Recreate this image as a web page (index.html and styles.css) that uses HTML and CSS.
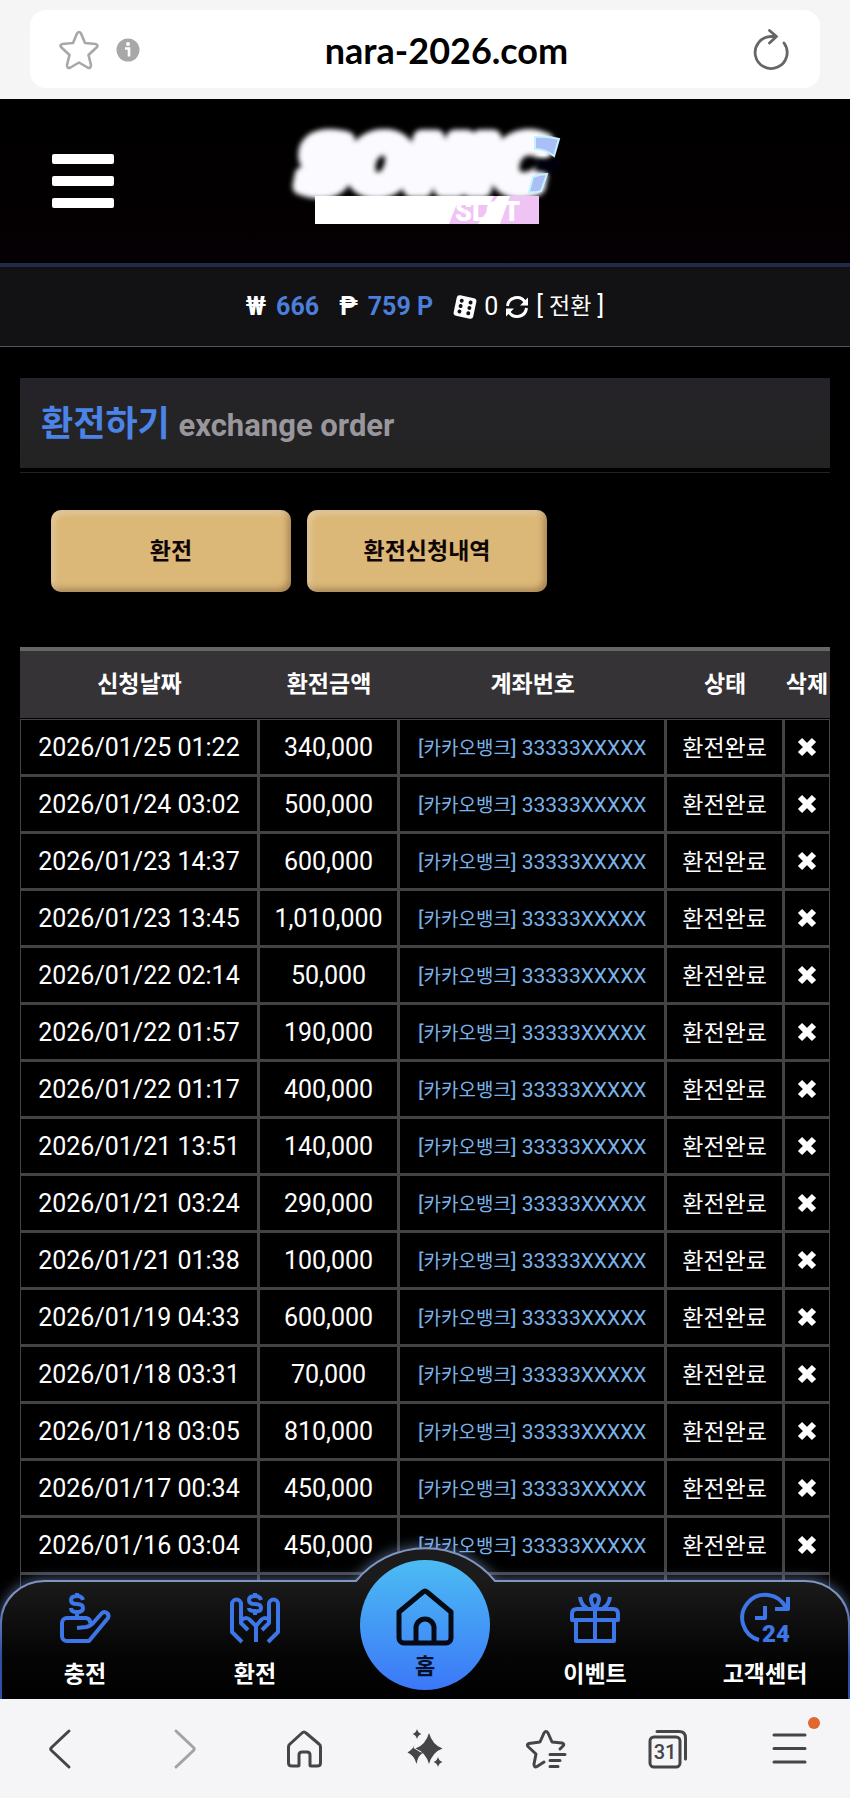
FILE: index.html
```html
<!DOCTYPE html>
<html lang="ko">
<head>
  <meta charset="UTF-8" />
  <meta name="viewport" content="width=device-width, initial-scale=1.0"/>
  <title>환전하기</title>
  <link rel="stylesheet" href="styles.css">
</head>
<body>
  <div class="address-bar">
    <div class="address-field">
      <button class="plain" aria-label="즐겨찾기">
        <svg width="40" height="40" viewBox="0 0 40 40" fill="none" stroke="#a8a8a8" stroke-width="2.6" stroke-linejoin="round"><path d="M18 3.5Q20 .5 22 3.5L26 13L36.500 14Q40 15 37.500 17.500L29.500 25L32 35Q32 39 28.500 37.500L20 32.500L11.500 37.500Q8 39 8 35L10.500 25L2.500 17.500Q0 15 3.500 14L14 13Z"/></svg>
      </button>
      <svg width="24" height="24" viewBox="0 0 24 24"><circle cx="12" cy="12" r="11.500" fill="#a8a8a8"/><circle cx="12" cy="6" r="2" fill="#fff"/><path d="M9 10.500h4v8" fill="none" stroke="#fff" stroke-width="2.600"/></svg>
      <input class="url" type="text" value="nara-2026.com" aria-label="주소" />
      <button class="plain" aria-label="새로고침">
        <svg width="36" height="42" viewBox="0 0 36 42" fill="none" stroke="#666" stroke-width="2.800" stroke-linecap="round" stroke-linejoin="round"><path d="M31 14A16 16 0 1 1 18 7.500H23M16.500 1.500L23.500 7.500L16.500 14"/></svg>
      </button>
    </div>
  </div>

  <div class="page">
    <header class="site-header">
      <button class="burger" aria-label="메뉴"><span></span><span></span><span></span></button>
      <a class="logo" href="#" aria-label="SONIC SLOT">
        <svg width="290" height="110" viewBox="0 0 290 110">
          <defs><filter id="glow" x="-10%" y="-20%" width="120%" height="140%"><feGaussianBlur stdDeviation="2.500"/></filter></defs>
          <g font-family="DejaVu Sans, sans-serif" font-weight="700" font-style="italic" font-size="70" filter="url(#glow)">
            <text x="20" y="63" fill="#fbfbff" stroke="#fbfbff" stroke-width="17" stroke-linejoin="round">SONIC</text>
          </g>
          <path d="M257 33L284 34L276 47L255 45Z" fill="#05060c" filter="url(#glow)"/>
          <path d="M255 11Q268 10 279 13L274 30Q265 23 255 23Z" fill="#a9bff5" stroke="#c6f1ff" stroke-width="2"/>
          <path d="M253 51Q260 48 267 48L261 65Q255 67 249 66Z" fill="#a9bff5" stroke="#c6f1ff" stroke-width="2"/>
          <rect x="35" y="70" width="224" height="28" fill="#fff"/>
          <path d="M180 70h79v28h-90z" fill="#efc4f5"/>
          <path d="M178 70h36l-5 9h-33zM218 70h12l-10 28h-22z" fill="#fff"/>
          <text x="175" y="95" font-family="Roboto, sans-serif" font-size="27" font-weight="900" fill="#fff">SLOT</text>
        </svg>
      </a>
    </header>

    <div class="wallet">
      <div class="wallet-item"><b>₩</b><b class="amount">666</b></div>
      <div class="wallet-item"><b>₱</b><b class="amount">759 P</b></div>
      <div class="wallet-item casino">
        <svg width="24" height="24" viewBox="0 0 24 24"><g transform="rotate(12 12 12)"><rect x="2" y="1.500" width="20" height="21" rx="3" fill="#fff"/><g fill="#121214"><circle cx="7.500" cy="6.500" r="2"/><circle cx="7.500" cy="12" r="2"/><circle cx="7.500" cy="17.500" r="2"/><circle cx="16.500" cy="6.500" r="2"/><circle cx="16.500" cy="12" r="2"/><circle cx="16.500" cy="17.500" r="2"/></g></g></svg>
        <span>0</span>
        <a class="convert" href="#">
          <svg width="24" height="24" viewBox="0 0 24 24" fill="none" stroke="#fff" stroke-width="3"><path d="M2.500 11A9.500 9.500 0 0 1 20 7M21.500 13A9.500 9.500 0 0 1 4 17"/><path d="M23 2.500v8h-8zM1 21.500v-8h8z" fill="#fff" stroke="none"/></svg>
          <span>[ <span class="convert-label">전환</span> ]</span>
        </a>
      </div>
    </div>

    <main>
      <h1>환전하기 <small>exchange order</small></h1>

      <div class="actions">
        <button class="gold">환전</button>
        <button class="gold">환전신청내역</button>
      </div>

      <table>
        <colgroup><col class="c-date"><col class="c-amount"><col class="c-account"><col class="c-state"><col class="c-delete"></colgroup>
        <thead>
          <tr><th>신청날짜</th><th>환전금액</th><th>계좌번호</th><th>상태</th><th>삭제</th></tr>
        </thead>
        <tbody id="orders"></tbody>
      </table>
    </main>

    <nav class="dock">
      <svg class="dock-bg" viewBox="0 0 850 160" preserveAspectRatio="none">
        <defs><linearGradient id="dockFill" x1="0" y1="0" x2="0" y2="1"><stop offset=".2" stop-color="#1b1b1c"/><stop offset=".7" stop-color="#050506"/><stop offset="1" stop-color="#000"/></linearGradient>
        <linearGradient id="dockLine" x1="0" y1="0" x2="0" y2="1"><stop offset=".3" stop-color="#8095c0"/><stop offset=".7" stop-color="#3050a8"/></linearGradient></defs>
        <path d="M1 162V84A44 42 0 0 1 45 42H356A90 90 0 0 1 495 42H805A44 42 0 0 1 849 84V162Z" fill="url(#dockFill)" stroke="url(#dockLine)" stroke-width="2"/>
      </svg>
      <a class="dock-item" href="#">
        <svg width="50" height="50" viewBox="0 0 50 50"><path d="M17 35L26 34Q31 33 34 29L42 20A4 4 0 0 1 48 25L29 48H7A5 5 0 0 1 2 43V30A5 5 0 0 1 7 25H26Q31 26 30 31"/><path d="M17 0v3M17 19v6M23 7Q22 3 17 3Q11 3 11 7T17 11Q23 11 23 15T17 19Q11 19 11 15"/></svg>
        충전
      </a>
      <a class="dock-item" href="#">
        <svg width="50" height="50" viewBox="0 0 50 50"><path d="M12 49L2 39V11A4 4 0 0 1 11 11V30L18 37M38 49L48 39V11A4 4 0 0 0 39 11V30L32 37M12 27Q16 23 20 27L26 33L31 27Q35 23 39 27M26 33V49"/><path d="M25 0v3M25 18v4M31 7Q30 3 25 3Q19 3 19 7T25 11Q31 11 31 15T25 18Q19 18 19 15"/></svg>
        환전
      </a>
      <a class="dock-item" href="#">
        <span class="home-disc">
          <svg width="58" height="58" viewBox="0 0 58 58"><path d="M27 4Q29 2 31 4L55 24V50A5 5 0 0 1 50 55H8A5 5 0 0 1 3 50V24ZM20 55V40A9 9 0 0 1 38 40V55"/></svg>
          홈
        </span>
      </a>
      <a class="dock-item" href="#">
        <svg width="50" height="50" viewBox="0 0 50 50"><path d="M6 28V48H44V28M25 16V48M2 27V21Q2 16 7 16H43Q48 16 48 21V27ZM25 16Q17 3 25 2Q33 3 25 16ZM10 4Q11 12 17 15M40 4Q39 12 33 15"/></svg>
        이벤트
      </a>
      <a class="dock-item" href="#">
        <svg width="50" height="50" viewBox="0 0 50 50"><path d="M19 47A23 23 0 1 1 46 15M48 4V16H35M25 13V25H15"/><text x="22" y="49" font-size="24">24</text></svg>
        고객센터
      </a>
    </nav>
  </div>

  <div class="browser-bar">
    <button class="plain" aria-label="뒤로"><svg width="40" height="40" viewBox="0 0 40 40"><path d="M28 2L10.500 18.500Q9 20 10.500 21.500L28 38"/></svg></button>
    <button class="plain" aria-label="앞으로"><svg class="off" width="40" height="40" viewBox="0 0 40 40"><path d="M14 2L31.500 18.500Q33 20 31.500 21.500L14 38"/></svg></button>
    <button class="plain" aria-label="홈"><svg width="40" height="40" viewBox="0 0 40 40"><path d="M18 4Q20 2 22 4L35 15Q36.500 16 36.500 18V34Q36.500 37 33 37H27Q26 37 26 36V26Q26 23 23 23H18Q15 23 15 26V36Q15 37 14 37H8Q4.500 37 4.500 34V18Q4.500 16 6 15Z"/></svg></button>
    <button class="plain" aria-label="AI"><svg class="solid" width="40" height="40" viewBox="0 0 40 40"><path d="M24 4Q27.500 16 37.500 19.500Q27.500 23 24 35Q20.500 23 10.500 19.500Q20.500 16 24 4ZM12 0Q13 4 16.500 5Q13 6 12 10Q11 6 7.500 5Q11 4 12 0ZM33 28Q34 32 37.500 33Q34 34 33 38Q32 34 28.500 33Q32 32 33 28ZM11 12L8.500 19L15 23L18 24Q13 26 11.500 35Q9 26 2.500 23.500Q9 20 11 12Z"/></svg></button>
    <button class="plain" aria-label="북마크"><svg width="40" height="40" viewBox="0 0 40 40"><path d="M34 20L37 17Q39 15 36 14L26 13L22 4Q20 1 18 4L14 13L3 14.500Q0 15.500 2.500 18L10 25L8 35Q8 39 11 37.500L18 33M24 25.500H39M24 31.500H34M24 37.500H32"/></svg></button>
    <button class="plain" aria-label="탭"><svg width="40" height="40" viewBox="0 0 40 40"><rect x="2" y="8" width="30" height="30" rx="4"/><path d="M9 2.500H31Q37.500 2.500 37.500 9V30"/><text x="17" y="30" text-anchor="middle" font-size="20">31</text></svg></button>
    <button class="plain menu" aria-label="메뉴"><svg width="40" height="40" viewBox="0 0 40 40"><path d="M5 6H36M5 19.500H36M5 33H36"/></svg><i class="dot"></i></button>
  </div>

  <script>
    const orders = [
      ['2026/01/25 01:22', '340,000'],
      ['2026/01/24 03:02', '500,000'],
      ['2026/01/23 14:37', '600,000'],
      ['2026/01/23 13:45', '1,010,000'],
      ['2026/01/22 02:14', '50,000'],
      ['2026/01/22 01:57', '190,000'],
      ['2026/01/22 01:17', '400,000'],
      ['2026/01/21 13:51', '140,000'],
      ['2026/01/21 03:24', '290,000'],
      ['2026/01/21 01:38', '100,000'],
      ['2026/01/19 04:33', '600,000'],
      ['2026/01/18 03:31', '70,000'],
      ['2026/01/18 03:05', '810,000'],
      ['2026/01/17 00:34', '450,000'],
      ['2026/01/16 03:04', '450,000']
    ];
    const tbody = document.getElementById('orders');

    orders.forEach(([date, amount]) => {
      const tr = document.createElement('tr');
      tr.innerHTML = `<td>${date}</td><td>${amount}</td>
        <td class="account">[<span>카카오뱅크</span>] 33333XXXXX</td>
        <td class="state">환전완료</td>
        <td><button class="plain delete" aria-label="삭제"><svg width="20" height="20" viewBox="0 0 20 20"><path d="M3 3L17 17M17 3L3 17"/></svg></button></td>`;
      tbody.appendChild(tr);
    });
    // last row runs under the dock
    tbody.insertAdjacentHTML('beforeend', '<tr><td></td><td></td><td></td><td></td><td></td></tr>');
  </script>
</body>
</html>
```
FILE: styles.css
```css
* { box-sizing: border-box; }
body { margin: 0; height: 100vh; display: flex; flex-direction: column; background: #000; color: #fff; font-family: Roboto, "Noto Sans CJK KR", sans-serif; font-size: 25px; overflow: hidden; }
a { color: inherit; text-decoration: none; }
svg { display: block; flex: none; overflow: visible; }
button { font-family: inherit; cursor: pointer; }
.plain { background: none; border: 0; padding: 0; display: flex; justify-content: center; align-items: center; }

.address-bar { flex: none; background: #f5f5f5; padding: 10px 30px 11px; }
.address-field { display: flex; align-items: center; height: 78px; padding: 2px 31px 0 29px; background: #fff; border-radius: 16px; }
.address-field > svg { margin-left: 17px; }
.url { flex: 1; min-width: 0; border: 0; padding: 0; background: none; text-align: center; font-family: Lato, sans-serif; font-weight: 700; font-size: 36px; color: #000; outline: 0; }

.page { flex: 1; min-height: 0; position: relative; overflow: hidden; background: linear-gradient(#000, #050003 163px, #000 163px); }
.site-header { display: grid; grid-template-columns: 1fr auto 1fr; align-items: center; height: 164px; padding: 0 52px; }
.burger { display: flex; flex-direction: column; gap: 12px; width: 62px; padding: 0; border: 0; background: none; }
.burger span { height: 10px; width: 100%; background: #fff; border-radius: 2px; }

.wallet { display: flex; justify-content: center; align-items: center; gap: 20px; height: 84px; border-top: 4px solid #1f2a4c; border-bottom: 1px solid #555; background: #121214; }
.wallet-item, .convert { display: flex; align-items: center; gap: 10px; line-height: 30px; }
.casino, .convert { gap: 7px; }
.amount { color: #4b7fdb; }
.convert-label { font-size: 23px; }

main { padding: 31px 20px 0; }
h1 { margin: 0 0 4px; height: 90px; padding: 2px 21px 0; line-height: 90px; background: linear-gradient(#252328, #232323); font-size: 35px; color: #4b83e6; }
h1 small { font-size: 31px; color: #99979b; }
.actions { display: flex; gap: 16px; padding: 37px 31px 55px; border-top: 1px solid #222; }
.gold { width: 240px; height: 82px; padding: 0 0 4px; border: 0; border-radius: 10px; background: #dbb878; box-shadow: inset 3px 3px 6px rgba(255, 255, 255, .3), inset -3px -3px 6px rgba(60, 30, 0, .35); color: #100505; font-size: 23px; font-weight: 700; }

table { width: 100%; table-layout: fixed; border-collapse: separate; border-spacing: 0; text-align: center; }
.c-date { width: 29.5%; }
.c-amount { width: 17.3%; }
.c-account { width: 33%; }
.c-state { width: 14.5%; }
.c-delete { width: 5.7%; }
th { height: 72px; padding: 0 0 5px; background: #353335; border-top: 4px solid #666; border-bottom: 1px solid #000; font-size: 23px; white-space: nowrap; }
td { height: 57px; padding: 0; border: solid #434245; border-width: 1px 2px 2px 1px; white-space: nowrap; }
td:last-child { border-right-width: 1px; }
.account { padding-bottom: 2px; font-size: 21px; color: #7ab3ea; }
.account span { font-size: 19px; }
.state { padding-bottom: 3px; font-size: 23px; }
.delete { margin: 0 auto; }
.delete path { stroke: #fff; stroke-width: 6; }

.dock { position: absolute; left: 0; right: 0; bottom: 0; height: 160px; display: grid; grid-template-columns: repeat(5, 1fr); align-items: end; }
.dock-bg { position: absolute; width: 100%; height: 100%; filter: drop-shadow(0 -2px 6px rgba(130, 160, 220, .5)); }
.dock-item { position: relative; display: flex; flex-direction: column; align-items: center; gap: 17px; padding-bottom: 9px; font-size: 23px; line-height: 30px; font-weight: 700; }
.dock-item path { fill: none; stroke: #3d76e8; stroke-width: 4; stroke-linejoin: round; }
.dock-item text { fill: #3d76e8; font-weight: 900; }
.home-disc { display: flex; flex-direction: column; align-items: center; gap: 6px; width: 130px; height: 130px; padding-top: 28px; border-radius: 50%; background: linear-gradient(#4cbcf3, #3b77f8); color: #071028; font-size: 22px; }
.home-disc path { stroke: #050a14; stroke-width: 5; }

.browser-bar { flex: none; height: 99px; display: grid; grid-template-columns: repeat(7, 1fr); background: #f5f4f7; }
.browser-bar path, .browser-bar rect { fill: none; stroke: #454547; stroke-width: 3; stroke-linecap: round; stroke-linejoin: round; }
.browser-bar text { fill: #454547; font-weight: 500; }
.browser-bar .off path { stroke: #a3a2a5; }
.browser-bar .solid path { fill: #454547; stroke: none; }
.menu { position: relative; }
.dot { position: absolute; top: 18px; right: 30px; width: 12px; height: 12px; border-radius: 50%; background: #e0672f; }
```
